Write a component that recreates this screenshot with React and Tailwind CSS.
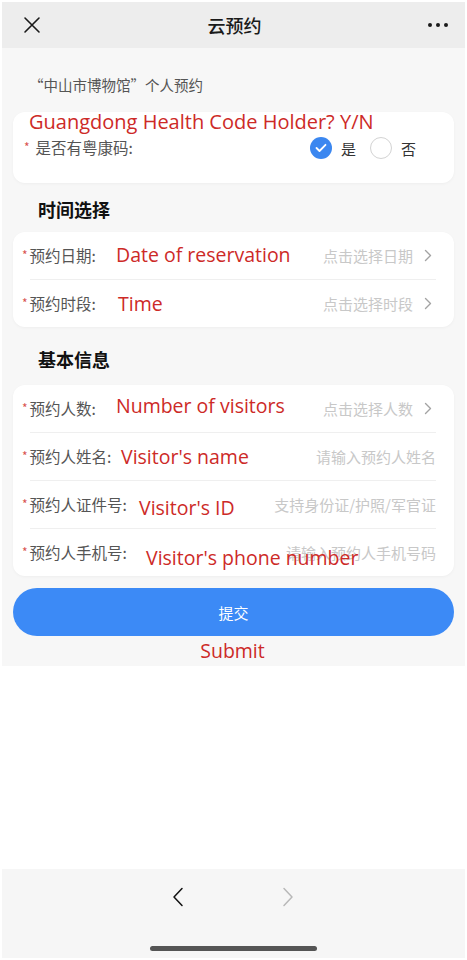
import { useState } from 'react';

const cn = "font-['Noto_Sans_CJK_SC','Noto_Sans',sans-serif]";
const note = "font-['Open_Sans','Noto_Sans',sans-serif] text-[19.5px] leading-none text-[#cd2a27] whitespace-nowrap";

function Chevron({ className = '' }) {
    return (
        <svg width="8" height="13" viewBox="0 0 8 13" fill="none" className={className}>
            <path d="M1.5 1.5L6.5 6.5L1.5 11.5" stroke="currentColor" strokeWidth="1.4" strokeLinecap="round" strokeLinejoin="round" />
        </svg>
    );
}

function Radio({ checked }) {
    if (!checked) return <span className="w-[22px] h-[22px] rounded-full border border-[#d3d3d3]" />;
    return (
        <span className="w-[22px] h-[22px] rounded-full bg-[#3b87f0] flex items-center justify-center">
            <svg width="12" height="10" viewBox="0 0 12 10" fill="none">
                <path d="M1.5 5L4.5 8L10.5 1.8" stroke="white" strokeWidth="1.8" strokeLinecap="round" strokeLinejoin="round" />
            </svg>
        </span>
    );
}

function Row({ label, hint, arrow, annotation, noteLeft, noteShift, last }) {
    return (
        <div className="relative">
            <div className="h-[47px] flex items-center pl-[9px]">
                <span className="text-[#d9534f] text-[12px] leading-none mr-[2px] -mt-[2px]">*</span>
                <span className="text-[15.5px] text-[#555] leading-none">{label}</span>
                <div className={`ml-auto flex items-center ${arrow ? 'pr-[22px]' : 'pr-[18px]'}`}>
                    <span className="text-[15px] text-[#c8c8c8] leading-none">{hint}</span>
                    {arrow && <Chevron className="ml-[11px] text-[#a3a3a3]" />}
                </div>
            </div>
            {!last && <div className="ml-[17px] mr-[18px] h-px bg-[#efefef]" />}
            {/* English labels laid over the form */}
            <div className={`absolute inset-y-0 flex items-center ${noteLeft} ${noteShift}`}>
                <span className={note}>{annotation}</span>
            </div>
        </div>
    );
}

export default function App() {
    const [hasCode, setHasCode] = useState(true);

    return (
        <div className={`w-[467px] h-[960px] bg-white p-[2px] flex flex-col ${cn}`}>
            <header className="h-[46px] shrink-0 bg-[#ededed] flex items-center justify-between pl-[21px] pr-[17px]">
                <svg width="18" height="18" viewBox="0 0 18 18" fill="none">
                    <path d="M2 2L16 16M16 2L2 16" stroke="#1a1a1a" strokeWidth="1.6" strokeLinecap="round" />
                </svg>
                <h1 className="text-[18px] font-medium text-[#1a1a1a] leading-none">云预约</h1>
                <div className="flex gap-[4px] items-center">
                    <span className="w-[4px] h-[4px] rounded-full bg-[#1a1a1a]" />
                    <span className="w-[4px] h-[4px] rounded-full bg-[#1a1a1a]" />
                    <span className="w-[4px] h-[4px] rounded-full bg-[#1a1a1a]" />
                </div>
            </header>

            <main className="h-[618px] shrink-0 bg-[#f7f7f7] flex flex-col px-[11px]">
                <p className="pt-[27px] pl-[16px] text-[14.5px] leading-[20px] text-[#555]">“中山市博物馆”个人预约</p>

                <section className="relative mt-[17px] h-[71px] bg-white rounded-[12px] shadow-[0_1px_3px_rgba(0,0,0,0.04)]">
                    <div className="absolute left-[16px] top-[-2px]">
                        <span className={`${note} text-[20px]`}>Guangdong Health Code Holder? Y/N</span>
                    </div>
                    <div className="pt-[21px] h-[51px] flex items-center pl-[11px] pr-[38px]">
                        <span className="text-[#d9534f] text-[12px] leading-none mr-[6px] -mt-[2px]">*</span>
                        <span className="text-[15.5px] text-[#555] leading-none">是否有粤康码:</span>
                        <div className="ml-auto flex items-center">
                            <button onClick={() => setHasCode(true)} className="flex items-center">
                                <Radio checked={hasCode} />
                                <span className="ml-[9px] text-[15px] text-[#333] leading-none">是</span>
                            </button>
                            <button onClick={() => setHasCode(false)} className="flex items-center ml-[14px]">
                                <Radio checked={!hasCode} />
                                <span className="ml-[9px] text-[15px] text-[#333] leading-none">否</span>
                            </button>
                        </div>
                    </div>
                </section>

                <h2 className="mt-[14px] pl-[25px] text-[18px] font-bold leading-[24px] text-[#111]">时间选择</h2>
                <section className="mt-[11px] bg-white rounded-[12px] shadow-[0_1px_3px_rgba(0,0,0,0.04)]">
                    <Row label="预约日期:" hint="点击选择日期" arrow annotation="Date of reservation" noteLeft="left-[103px]" noteShift="pb-[3px]" />
                    <Row label="预约时段:" hint="点击选择时段" arrow annotation="Time" noteLeft="left-[105px]" noteShift="pt-[0px]" last />
                </section>

                <h2 className="mt-[20px] pl-[25px] text-[18px] font-bold leading-[24px] text-[#111]">基本信息</h2>
                <section className="mt-[14px] bg-white rounded-[12px] shadow-[0_1px_3px_rgba(0,0,0,0.04)]">
                    <Row label="预约人数:" hint="点击选择人数" arrow annotation="Number of visitors" noteLeft="left-[103px]" noteShift="pb-[6px]" />
                    <Row label="预约人姓名:" hint="请输入预约人姓名" annotation="Visitor's name" noteLeft="left-[108px]" noteShift="pb-[1px]" />
                    <Row label="预约人证件号:" hint="支持身份证/护照/军官证" annotation="Visitor's ID" noteLeft="left-[126px]" noteShift="pt-[5px]" />
                    <Row label="预约人手机号:" hint="请输入预约人手机号码" annotation="Visitor's phone number" noteLeft="left-[133px]" noteShift="pt-[11px]" last />
                </section>

                <button className="mt-[12px] h-[48px] rounded-full bg-[#3c8af6] text-white text-[15px] leading-none">提交</button>
                <p className={`${note} mt-[5px] text-center pr-[2px]`}>Submit</p>
            </main>

            <div className="flex-1 bg-white" />

            <nav className="h-[89px] shrink-0 bg-[#f6f6f6] flex flex-col items-center">
                <div className="h-[56px] flex items-center gap-[98px] pr-[2px]">
                    <svg width="12" height="20" viewBox="0 0 12 20" fill="none">
                        <path d="M10 1.5L2 10L10 18.5" stroke="#111" strokeWidth="1.5" strokeLinecap="round" strokeLinejoin="round" />
                    </svg>
                    <svg width="12" height="20" viewBox="0 0 12 20" fill="none">
                        <path d="M2 1.5L10 10L2 18.5" stroke="#b8b8b8" strokeWidth="1.5" strokeLinecap="round" strokeLinejoin="round" />
                    </svg>
                </div>
                <div className="mt-[21px] w-[167px] h-[5px] rounded-full bg-[#555]" />
            </nav>
        </div>
    );
}
